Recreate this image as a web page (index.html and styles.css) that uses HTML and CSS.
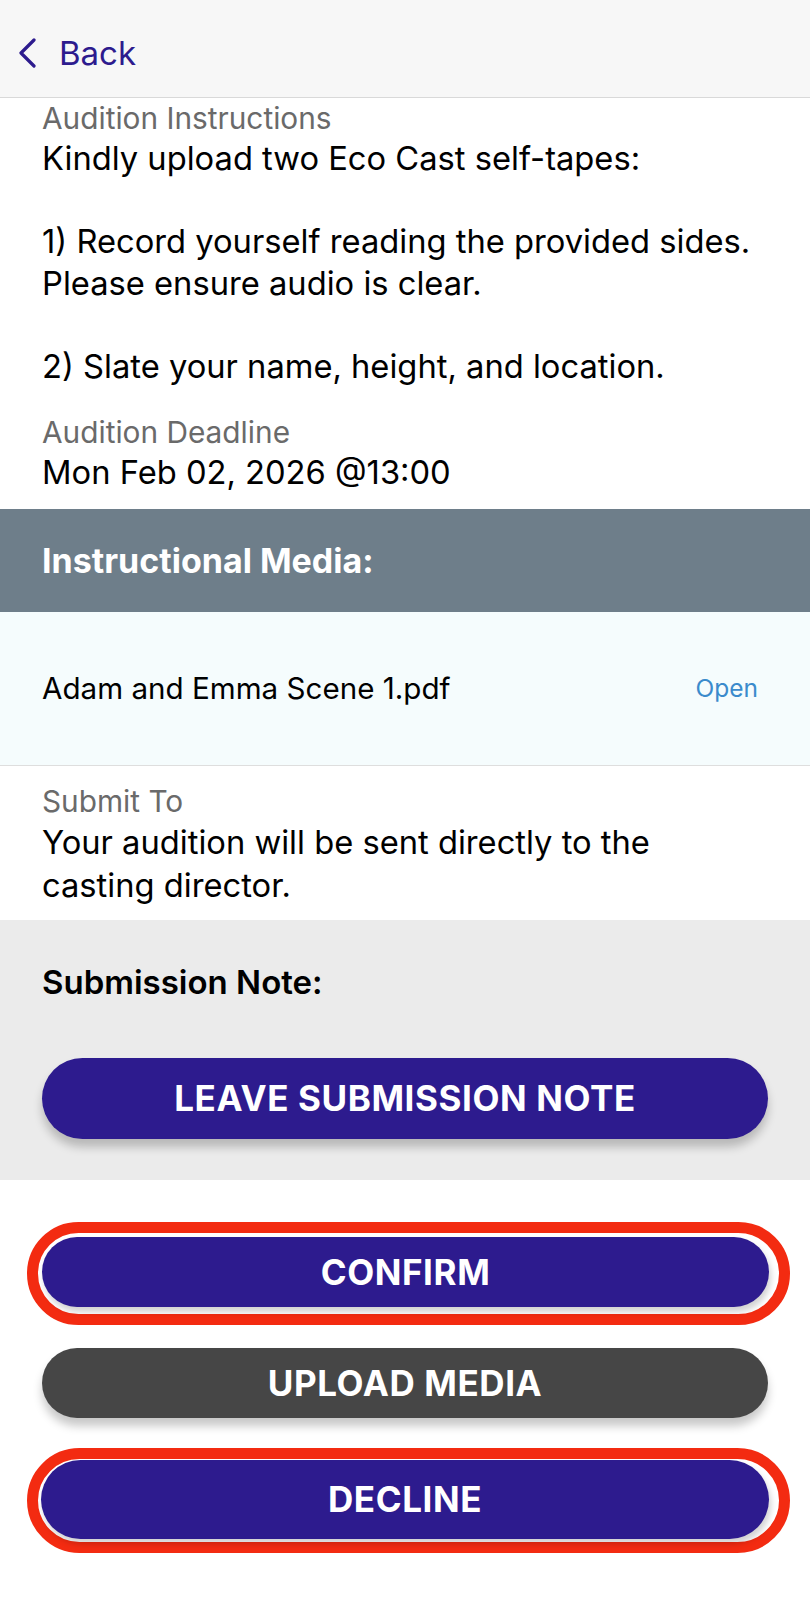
FILE: index.html
```html
<!DOCTYPE html>
<html lang="en">
<head>
  <meta charset="UTF-8">
  <title>Audition</title>
  <link rel="stylesheet" href="styles.css">
</head>

<body>
  <!-- top navigation -->
  <div class="topBar">
    <a class="backLink" href="#">
      <svg class="backIcon" width="22" height="30" viewBox="0 0 22 30">
        <path d="M17 2 L4 15 L17 28" fill="none" stroke="#2d1b8e" stroke-width="3.2" stroke-linecap="round" stroke-linejoin="round"/>
      </svg>
      Back
    </a>
  </div>

  <div class="infoBlock">
    <div class="fieldLabel">Audition Instructions</div>
    <div class="fieldValue">Kindly upload two Eco Cast self-tapes:

1) Record yourself reading the provided sides.
Please ensure audio is clear.

2) Slate your name, height, and location.</div>

    <div class="fieldLabel deadlineLabel">Audition Deadline</div>
    <div class="fieldValue">Mon Feb 02, 2026 @13:00</div>
  </div>

  <div class="sectionHeader">Instructional Media:</div>

  <div class="mediaRow">
    <span class="mediaName">Adam and Emma Scene 1.pdf</span>
    <a class="openLink" href="#">Open</a>
  </div>

  <div class="infoBlock submitBlock">
    <div class="fieldLabel">Submit To</div>
    <div class="fieldValue">Your audition will be sent directly to the
casting director.</div>
  </div>

  <div class="noteSection">
    <div class="noteTitle">Submission Note:</div>
    <button class="pillButton">Leave Submission Note</button>
  </div>

  <div class="actions">
    <div class="highlightRing">
      <button class="pillButton">Confirm</button>
    </div>
    <button class="pillButton darkButton">Upload Media</button>
    <div class="highlightRing tightRing">
      <button class="pillButton">Decline</button>
    </div>
  </div>
</body>
</html>
```

FILE: styles.css
```css
body {
  margin: 0;
  background-color: #ffffff;
  font-family: "Inter", "Noto Sans", sans-serif;
  color: #000000;
}

.topBar {
  height: 97px;
  background-color: #f7f7f7;
  border-bottom: 1px solid #d9d9d9;
  display: flex;
  align-items: center;
  padding-left: 17px;
}
.backLink {
  display: flex;
  align-items: center;
  gap: 20px;
  color: #2d1b8e;
  font-size: 33px;
  text-decoration: none;
  margin-top: 8px;
}

.infoBlock {
  padding: 2px 20px 15px 42px;
}
.fieldLabel {
  font-size: 29.8px;
  line-height: 36px;
  color: #6a6a6a;
}
.fieldValue {
  font-size: 32.7px;
  line-height: 41.5px;
  white-space: pre-line;
  margin-top: 2px;
}
.deadlineLabel {
  margin-top: 27px;
}

.sectionHeader {
  height: 103px;
  background-color: #6e7e8a;
  color: #ffffff;
  font-size: 34px;
  font-weight: 700;
  display: flex;
  align-items: center;
  padding: 0 42px;
}

.mediaRow {
  height: 153px;
  background-color: #f5fcfd;
  border-bottom: 1px solid #dedede;
  display: flex;
  align-items: center;
  justify-content: space-between;
  padding: 0 52px 0 42px;
}
.mediaName {
  font-size: 29.6px;
}
.openLink {
  color: #3b8bcc;
  font-size: 24.5px;
  text-decoration: none;
}

.submitBlock {
  padding-top: 17px;
  padding-bottom: 13px;
}
.submitBlock .fieldValue {
  line-height: 43px;
}

.noteSection {
  background-color: #ebebeb;
  padding: 42px 42px 41px 42px;
}
.noteTitle {
  font-size: 33px;
  font-weight: 600;
  margin-bottom: 56px;
}

.pillButton {
  display: block;
  width: 100%;
  height: 81px;
  border: none;
  border-radius: 41px;
  background-color: #2d1b8e;
  color: #ffffff;
  font-family: "Inter", "Noto Sans", sans-serif;
  font-size: 35px;
  font-weight: 700;
  letter-spacing: 0.6px;
  text-transform: uppercase;
  box-shadow: 0 8px 10px rgba(0, 0, 0, 0.22);
}
.darkButton {
  height: 70px;
  background-color: #464646;
  margin: 0 42px;
  width: calc(100% - 84px);
}

.actions {
  padding-top: 42px;
  padding-bottom: 48px;
  display: flex;
  flex-direction: column;
  gap: 23px;
}
.highlightRing {
  margin-left: 27px;
  margin-right: 20px;
  border: 11px solid #f32b11;
  border-radius: 60px;
  padding: 4px 10px 7px 4px;
  background-color: #ffffff;
}
.highlightRing .pillButton {
  height: 70px;
  box-shadow: 2px 5px 6px rgba(0, 0, 0, 0.18);
}
.tightRing {
  margin-top: 7px;
  padding: 1px 10px 3px 3px;
}
.tightRing .pillButton {
  height: 79px;
}
```
